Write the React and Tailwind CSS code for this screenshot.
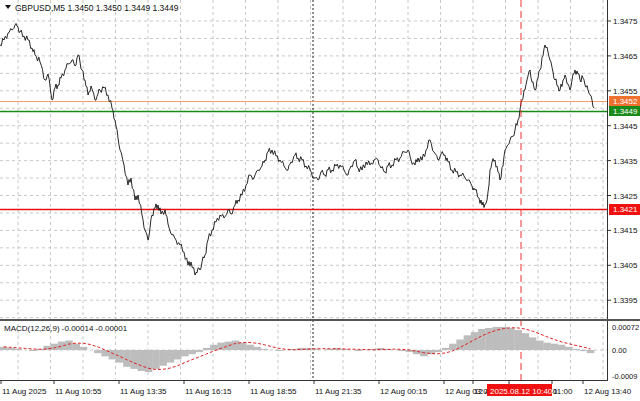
const price = [[0,45],[4,40],[8,33],[12,30],[15,25],[18,27],[20,32],[24,36],[28,40],[32,48],[35,55],[40,62],[45,80],[48,74],[52,100],[55,88],[58,85],[61,78],[65,70],[68,64],[72,60],[75,66],[78,55],[80,62],[82,70],[85,80],[88,95],[91,86],[95,100],[98,94],[100,90],[104,88],[108,95],[112,108],[115,120],[118,138],[120,150],[124,165],[128,185],[131,178],[135,200],[138,195],[142,215],[145,230],[148,240],[150,228],[152,215],[155,208],[158,205],[161,214],[165,210],[168,224],[172,235],[176,240],[180,245],[184,252],[188,265],[191,262],[195,275],[198,268],[200,270],[202,262],[205,255],[208,240],[212,230],[216,222],[220,215],[224,218],[228,210],[231,214],[235,205],[238,200],[242,195],[246,185],[250,175],[254,178],[258,170],[262,166],[265,160],[268,152],[272,150],[276,156],[280,160],[284,166],[288,170],[291,162],[295,155],[298,158],[302,160],[306,166],[310,170],[314,178],[318,180],[321,172],[325,175],[328,170],[332,170],[336,166],[340,165],[344,170],[348,175],[351,166],[355,160],[358,168],[362,170],[366,162],[370,165],[374,160],[378,160],[381,168],[385,172],[388,166],[392,165],[396,160],[400,158],[404,152],[408,150],[411,160],[415,165],[418,158],[422,160],[426,150],[430,140],[434,152],[438,160],[441,154],[445,155],[448,162],[452,170],[456,172],[460,175],[464,176],[468,180],[472,186],[475,190],[479,198],[482,205],[485,204],[487,200],[489,185],[490,170],[492,162],[495,160],[498,172],[500,180],[503,166],[505,150],[507,146],[510,140],[513,136],[515,130],[518,120],[520,110],[522,100],[525,90],[527,80],[530,70],[532,82],[535,90],[538,78],[540,70],[543,56],[545,45],[548,52],[550,60],[553,72],[555,80],[558,86],[560,90],[563,80],[565,75],[568,84],[570,90],[572,80],[575,70],[578,74],[580,80],[583,78],[585,85],[588,90],[590,95],[592,100],[594,108]];

const hist = [3,2,1,0,-1,1,4,6,8,9,6,3,0,-3,-6,-9,-12,-16,-18,-20,-21,-18,-15,-12,-9,-6,-4,-2,2,5,7,8,9,7,5,3,1,0,-1,0,1,2,2,1,0,1,2,1,0,-1,0,1,2,1,0,-1,-2,-4,-6,-4,-2,2,6,10,14,17,20,21,22,22,21,19,16,12,9,7,6,5,3,1,-1,-3];

const ticks = ['1.3475','1.3465','1.3455','1.3445','1.3435','1.3425','1.3415','1.3405','1.3395'];
const yOf = (p) => 21 + ((1.3475 - p) / 0.001) * 34.9;
const times = [['11 Aug 2025',2],['11 Aug 10:55',55],['11 Aug 13:35',120],['11 Aug 16:15',185],['11 Aug 18:55',250],['11 Aug 21:35',315],['12 Aug 00:15',380],['12 Aug 03:00',445],['12 Aug 05:40',510],['12 Aug 08:20',474],['11:00',553],['12 Aug 13:40',584]];

// add small zig-zag between key points so the line looks like M5 ticks
function jagged(list) {
  const out = [];
  for (let i = 0; i < list.length - 1; i++) {
    const [x1, y1] = list[i];
    const [x2, y2] = list[i + 1];
    out.push([x1, y1]);
    const n = Math.max(1, Math.round((x2 - x1) / 1.2));
    for (let k = 1; k < n; k++) {
      const t = k / n;
      const j = Math.sin((i * 7 + k) * 2.3) * 3.2;
      out.push([x1 + (x2 - x1) * t, y1 + (y2 - y1) * t + j]);
    }
  }
  out.push(list[list.length - 1]);
  return out;
}

export default function App() {
  const vgrid = Array.from({ length: 19 }, (_, i) => 18 + i * 32.5);
  const hgrid = Array.from({ length: 18 }, (_, i) => 21 + i * 17.45);
  const pts = jagged(price).map(([x, y]) => `${x.toFixed(1)},${y.toFixed(1)}`).join(' ');
  const bw = 594 / hist.length;
  const sig = hist.map((v, i) => {
    const prev = hist.slice(Math.max(0, i - 4), i + 1);
    const avg = prev.reduce((a, b) => a + b, 0) / prev.length;
    return `${i * bw + bw / 2},${28 - avg * 1.05}`;
  }).join(' ');
  const f = '"Liberation Sans", Arial, sans-serif';
  return (
    <div className="w-[640px] h-[401px] bg-white overflow-hidden text-black">
      <svg width="640" height="401" className="block" fontFamily={f}>
        {hgrid.filter((y) => y < 318).map((y) => (
          <line key={'h' + y} x1="0" x2="607" y1={y} y2={y} stroke="#c8c8c8" strokeDasharray="3,3" strokeWidth="1" />
        ))}
        {vgrid.map((x) => (
          <line key={'v' + x} x1={x} x2={x} y1="0" y2="379" stroke="#c8c8c8" strokeDasharray="3,3" strokeWidth="1" />
        ))}
        <line x1="313" x2="313" y1="0" y2="379" stroke="#222" strokeDasharray="2,2" />
        <line x1="0" x2="607" y1="101.5" y2="101.5" stroke="#f4a070" />
        <line x1="0" x2="607" y1="111.5" y2="111.5" stroke="#1a8a1a" strokeWidth="1.5" />
        <line x1="0" x2="607" y1="209.5" y2="209.5" stroke="#e81010" strokeWidth="1.5" />
        <polyline points={pts} fill="none" stroke="#111" strokeWidth="0.9" />
        <line x1="521" x2="521" y1="0" y2="380" stroke="#f03030" strokeDasharray="7,4" />
        <path d="M5 5 L11 5 L8 9 Z" fill="#111" />
        <text x="15" y="11" fontSize="8.5" fill="#111">GBPUSD,M5  1.3450 1.3450 1.3449 1.3449</text>
        <line x1="607.5" x2="607.5" y1="0" y2="380" stroke="#333" />
        {ticks.map((t) => (
          <g key={t}>
            <line x1="607" x2="611" y1={yOf(+t)} y2={yOf(+t)} stroke="#333" />
            <text x="613" y={yOf(+t) + 3} fontSize="8" fill="#111">{t}</text>
          </g>
        ))}
        <rect x="609" y="96" width="31" height="10" fill="#f07030" />
        <text x="613" y="104" fontSize="8" fill="#fff">1.3452</text>
        <rect x="609" y="106" width="31" height="10" fill="#1a8a1a" />
        <text x="613" y="114" fontSize="8" fill="#fff">1.3449</text>
        <rect x="609" y="204" width="31" height="11" fill="#f01010" />
        <text x="613" y="212" fontSize="8" fill="#fff">1.3421</text>
        <rect x="0" y="319" width="640" height="2" fill="#555" />
        <g transform="translate(0,322)">
          <line x1="0" x2="607" y1="28" y2="28" stroke="#c8c8c8" strokeDasharray="3,3" />
          {hist.map((v, i) => (
            <rect key={i} x={i * bw} width={bw + 0.3} y={v >= 0 ? 28 - v * 1.05 : 28} height={Math.abs(v) * 1.05} fill="#bdbdbd" />
          ))}
          <polyline points={sig} fill="none" stroke="#e02020" strokeDasharray="3,2" strokeWidth="1" />
          <text x="4" y="9" fontSize="8" fill="#111">MACD(12,26,9) -0.00014 -0.00001</text>
          <text x="612" y="8" fontSize="7.5" fill="#111">0.00072</text>
          <text x="612" y="31" fontSize="7.5" fill="#111">0.00</text>
          <text x="612" y="57" fontSize="7.5" fill="#111">-0.0009</text>
        </g>
        <line x1="0" x2="608" y1="380.5" y2="380.5" stroke="#333" />
        {times.map(([t, x]) => (
          <g key={t}>
            <line x1={x - 1} x2={x - 1} y1="380" y2="384" stroke="#333" />
            <text x={x} y="394" fontSize="8" fill="#111">{t}</text>
          </g>
        ))}
        <rect x="487" y="384" width="65" height="12" fill="#f01010" />
        <text x="490" y="394" fontSize="8" fill="#fff">2025.08.12 10:40</text>
      </svg>
    </div>
  );
}
